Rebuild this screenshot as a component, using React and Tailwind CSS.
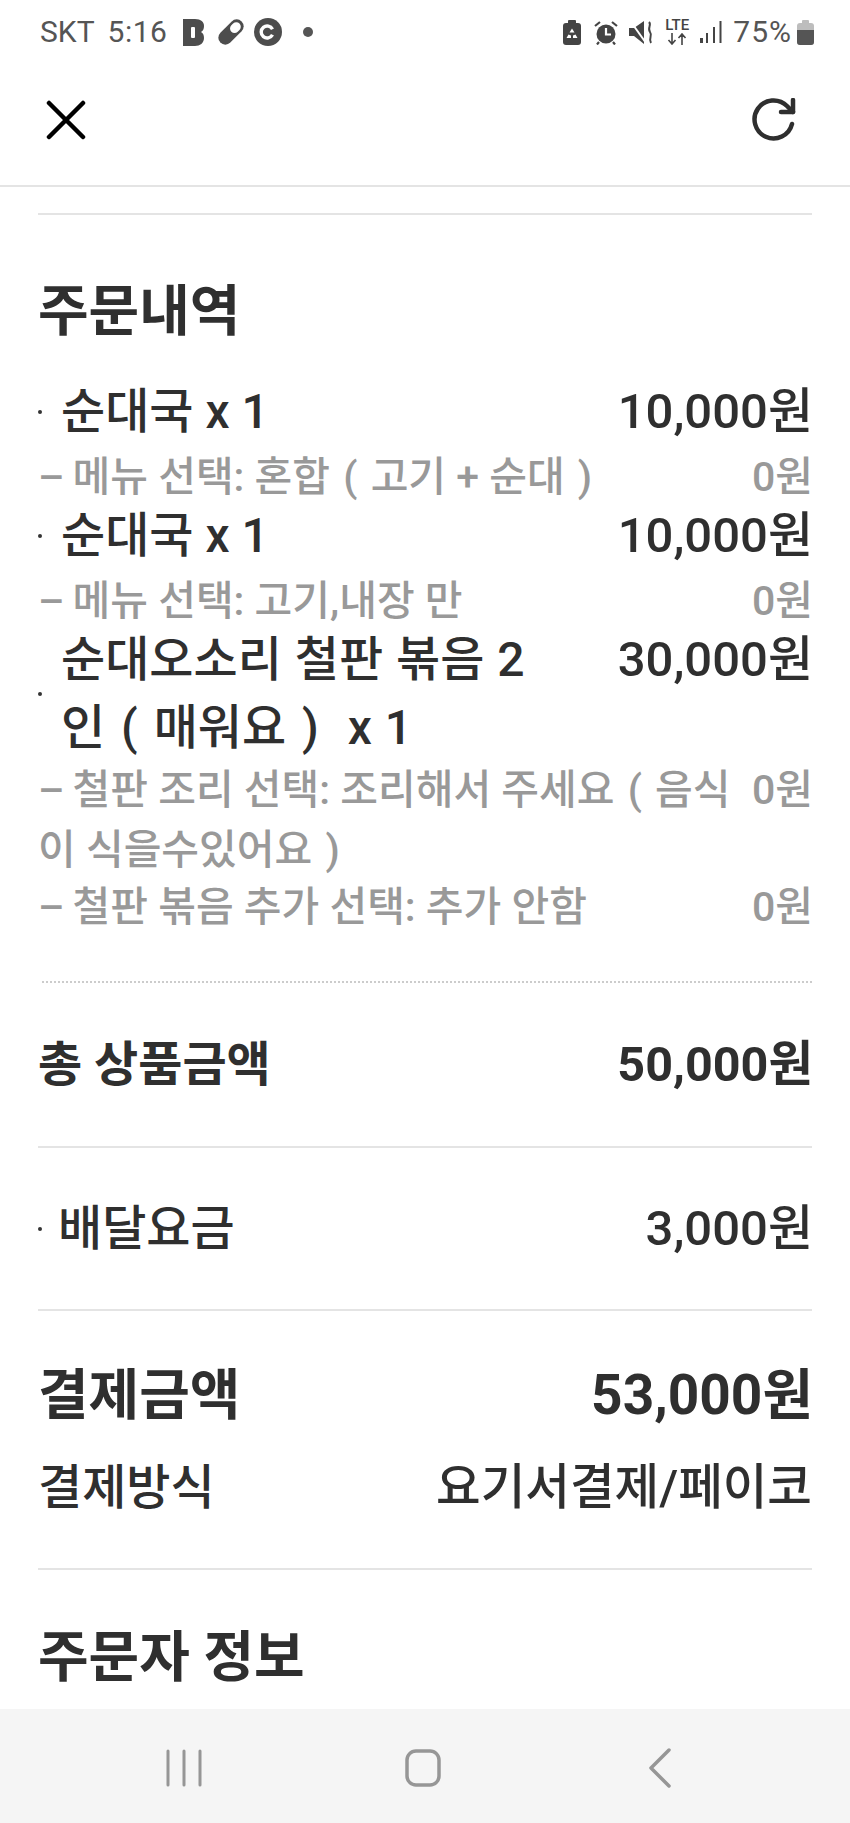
import React from 'react';

const FONT = 'font-["Roboto","Noto_Sans_CJK_KR",sans-serif]';

function StatusLeftIcons() {
  return (
    <div className="flex items-center">
      <svg width="22" height="28" viewBox="0 0 22 28" className="ml-[16px]">
        <path d="M0 1h12c6 0 9 3 9 7 0 3-1 5-3 6 2 1 3 3 3 6 0 5-4 8-9 8H0z" fill="#4d4d4d" />
        <rect x="8" y="9" width="4" height="11" rx="1" fill="#fff" />
      </svg>
      <svg width="28" height="28" viewBox="0 0 28 28" className="ml-[12px]">
        <g transform="rotate(-45 14 14)">
          <rect x="-1" y="7" width="30" height="14" rx="7" fill="#4d4d4d" />
          <rect x="14.5" y="9.5" width="11.5" height="9" rx="4.5" fill="#fff" />
        </g>
      </svg>
      <svg width="28" height="28" viewBox="0 0 28 28" className="ml-[9px]">
        <circle cx="14" cy="14" r="14" fill="#4d4d4d" />
        <path d="M18.5 11.2a6 6 0 1 0 0 5.6" fill="none" stroke="#fff" strokeWidth="3.4" />
      </svg>
      <span className="ml-[21px] w-[10px] h-[10px] rounded-full bg-[#555555]" />
    </div>
  );
}

function StatusRightIcons() {
  return (
    <div className="flex items-center">
      <svg width="18" height="25" viewBox="0 0 18 25">
        <rect x="0" y="3" width="18" height="22" rx="3" fill="#444444" />
        <rect x="5" y="0" width="8" height="4" rx="1" fill="#444444" />
        <path d="M9 8.500l2.500 4H6.500zM5.500 14.500l-2 3.500h4.500v-2.500zM12.500 14.500l2 3.500H10v-2.500z" fill="#fff" />
      </svg>
      <svg width="24" height="25" viewBox="0 0 24 25" className="ml-[13px]">
        <circle cx="12" cy="14" r="9.500" fill="#444444" />
        <path d="M12 8v6.500h5" fill="none" stroke="#fff" strokeWidth="2.200" />
        <path d="M1 6l5-4M23 6l-5-4M5 22l-2 2.500M19 22l2 2.500" stroke="#444444" strokeWidth="2.200" />
      </svg>
      <svg width="24" height="25" viewBox="0 0 24 25" className="ml-[11px]">
        <path d="M0 8h5l10-7v23L5 16H0z" fill="#444444" />
        <path d="M2 2l15 21" stroke="#fff" strokeWidth="2" />
        <path d="M20 2c3 3-2 6 1 10s-2 6 1 11" fill="none" stroke="#444444" strokeWidth="2" />
      </svg>
      <div className="ml-[11px] w-[26px] flex flex-col items-center text-[#444444]">
        <span className="text-[15px] leading-[13px] font-medium">LTE</span>
        <svg width="20" height="12" viewBox="0 0 20 12" className="mt-[1px]">
          <path d="M5 0v10M1.500 7L5 11l3.500-4M15 12V2M11.500 5L15 1l3.500 4" fill="none" stroke="#444444" strokeWidth="1.600" />
        </svg>
      </div>
      <svg width="22" height="24" viewBox="0 0 22 24" className="ml-[10px]">
        <rect x="0" y="18" width="3" height="5" fill="#444444" />
        <rect x="6" y="13" width="2" height="10" fill="#444444" />
        <rect x="13" y="7" width="2" height="16" fill="#444444" />
        <rect x="19.500" y="1" width="2" height="22" fill="#444444" />
      </svg>
      <span className="ml-[11px] text-[30px] leading-none text-[#555555] tracking-[1px]">75%</span>
      <svg width="17" height="25" viewBox="0 0 17 25" className="ml-[5px]">
        <rect x="0" y="3" width="17" height="22" rx="3" fill="#bdbdbd" />
        <rect x="5" y="0" width="7" height="4" rx="1" fill="#bdbdbd" />
        <path d="M0 10h17v12a3 3 0 0 1-3 3H3a3 3 0 0 1-3-3z" fill="#555555" />
      </svg>
    </div>
  );
}

// parens in the reference sit a little wider than Roboto's
function Paren({ children }) {
  return <span className="mx-[3px]">{children}</span>;
}

function Item({ name, price, nameClass = '' }) {
  return (
    <div className="flex items-center justify-between text-[48px] leading-[68px] font-medium text-[#2f2f2f]">
      <div className="flex items-center flex-1 min-w-0">
        <span className="w-[4px] h-[4px] rounded-full bg-[#333333] shrink-0" />
        <span className={`ml-[19px] ${nameClass}`}>{name}</span>
      </div>
      <span className="self-start shrink-0 text-[49px] -mr-[1px]">{price}</span>
    </div>
  );
}

function Sub({ children, price = '0원', top = '' }) {
  return (
    <div className={`flex justify-between text-[41px] leading-[60px] font-medium text-[#999999] ${top}`}>
      <div className="flex-1 min-w-0 pr-[14px]">
        <span className="-mr-[2px]">–</span> {children}
      </div>
      <span className="shrink-0 -mr-[1px]">{price}</span>
    </div>
  );
}

export default function App() {
  return (
    <div className={`${FONT} w-[850px] h-[1823px] bg-white flex flex-col overflow-hidden`}>
      {/* status bar */}
      <div className="h-[62px] flex items-center justify-between pl-[40px] pr-[36px] pt-[2px] shrink-0">
        <div className="flex items-center text-[30px] leading-none text-[#555555]">
          <span>SKT</span>
          <span className="ml-[13px] tracking-[0.5px]">5:16</span>
          <StatusLeftIcons />
        </div>
        <StatusRightIcons />
      </div>

      {/* header */}
      <div className="h-[125px] flex items-center justify-between pl-[46px] pr-[54px] pb-[8px] border-b-2 border-[#e4e4e4] shrink-0">
        <svg width="40" height="40" viewBox="0 0 40 40" stroke="#000000" strokeWidth="4.500" strokeLinecap="round">
          <path d="M3 3l34 34M37 3L3 37" />
        </svg>
        <svg width="44" height="44" viewBox="0 0 44 44" fill="none" stroke="#2f2f2f" strokeWidth="4.500" strokeLinecap="round" strokeLinejoin="round">
          <path d="M40 26a19 19 0 1 1-5-18l6 6" />
          <path d="M41 2v12H29" />
        </svg>
      </div>

      {/* content */}
      <div className="flex-1 min-h-0 overflow-hidden px-[38px] pt-[26px]">
        <div className="border-t-2 border-[#e4e4e4]" />

        <h2 className="mt-[66px] text-[55px] leading-[60px] font-bold text-[#2f2f2f]">주문내역</h2>

        <div className="mt-[37px]">
          <Item name="순대국 x 1" price="10,000원" />
          <Sub top="mt-[1px] -mb-[5px]">메뉴 선택: 혼합 <Paren>(</Paren> 고기 + 순대 <Paren>)</Paren></Sub>
          <Item name="순대국 x 1" price="10,000원" />
          <Sub top="mt-[1px] -mb-[5px]">메뉴 선택: 고기,내장 만</Sub>
          <Item
            name={<>순대오소리 철판 볶음 2 인 <Paren>(</Paren> 매워요 <Paren>)</Paren>{'\u00a0'} x 1</>}
            price="30,000원"
            nameClass="w-[470px] [word-spacing:1px]"
          />
          <Sub top="-mt-[2px]">철판 조리 선택: 조리해서 주세요 <Paren>(</Paren> 음식이 식을수있어요 <Paren>)</Paren></Sub>
          <Sub top="-mt-[3px]">철판 볶음 추가 선택: 추가 안함</Sub>
        </div>

        <div className="mt-[44px] ml-[4px] border-t-2 border-dotted border-[#cccccc]" />

        <div className="mt-[49px] flex justify-between text-[48px] leading-[66px] font-bold text-[#2f2f2f]">
          <span>총 상품금액</span>
          <span className="text-[48.5px] -mr-[1px]">50,000원</span>
        </div>
        <div className="mt-[48px] border-t-2 border-[#e4e4e4]" />

        <div className="mt-[48px] flex items-center justify-between text-[48px] leading-[66px] font-medium text-[#2f2f2f]">
          <div className="flex items-center">
            <span className="w-[4px] h-[4px] rounded-full bg-[#333333]" />
            <span className="ml-[16px]">배달요금</span>
          </div>
          <span className="text-[49px] -mr-[1px]">3,000원</span>
        </div>
        <div className="mt-[47px] border-t-2 border-[#e4e4e4]" />

        <div className="mt-[49px] flex justify-between text-[55px] leading-[70px] font-bold text-[#2f2f2f]">
          <span>결제금액</span>
          <span className="-mr-[1px]">53,000원</span>
        </div>
        <div className="mt-[28px] flex justify-between text-[48px] leading-[60px] font-medium text-[#2f2f2f]">
          <span>결제방식</span>
          <span className="text-[48.5px]">요기서결제/페이코</span>
        </div>
        <div className="mt-[50px] border-t-2 border-[#e4e4e4]" />

        <h2 className="mt-[54px] text-[55px] leading-[66px] font-bold text-[#2f2f2f]">주문자 정보</h2>
      </div>

      {/* nav bar */}
      <div className="h-[114px] bg-[#f5f5f5] shrink-0 relative">
        <div className="h-full flex items-center justify-between pl-[166px] pr-[178px] pt-[4px]">
          <svg width="36" height="38" viewBox="0 0 36 38" stroke="#969696" strokeWidth="3" strokeLinecap="round">
            <path d="M2 2v34M18 2v34M34 2v34" />
          </svg>
          <svg width="36" height="38" viewBox="0 0 36 38" fill="none" stroke="#969696" strokeWidth="3.500" className="mr-[4px]">
            <rect x="2" y="2" width="32" height="34" rx="9" />
          </svg>
          <svg width="24" height="40" viewBox="0 0 24 40" fill="none" stroke="#969696" strokeWidth="3.500" strokeLinecap="round" strokeLinejoin="round">
            <path d="M21 2L3 20l18 18" />
          </svg>
        </div>
      </div>
    </div>
  );
}
